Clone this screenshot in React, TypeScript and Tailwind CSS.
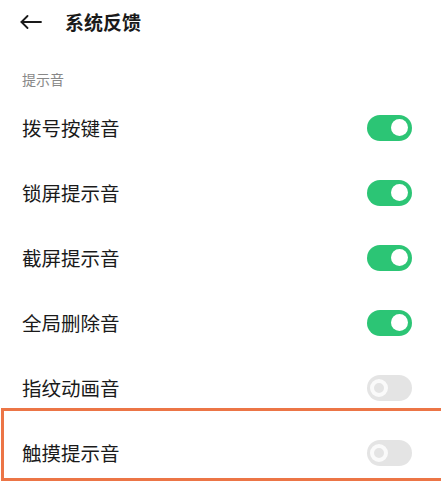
import React from "react";

const rows: { label: string; on: boolean }[] = [
  { label: "拨号按键音", on: true },
  { label: "锁屏提示音", on: true },
  { label: "截屏提示音", on: true },
  { label: "全局删除音", on: true },
  { label: "指纹动画音", on: false },
  { label: "触摸提示音", on: false },
];

function Toggle({ on }: { on: boolean }) {
  if (on) {
    return (
      <div className="w-[45px] h-[26px] rounded-full bg-[#2cc575] flex items-center justify-end pr-[4px]">
        <div className="w-[17px] h-[17px] rounded-full bg-white" />
      </div>
    );
  }
  return (
    <div className="w-[45px] h-[26px] rounded-full bg-[#e4e4e4] flex items-center justify-start pl-[3px]">
      <div className="w-[18px] h-[18px] rounded-full border-[4px] border-[#fafafa]" />
    </div>
  );
}

export default function App() {
  return (
    <div
      className="relative w-[441px] h-[497px] bg-white overflow-hidden"
      style={{ fontFamily: '"Noto Sans CJK SC", "Noto Sans", sans-serif' }}
    >
      <div className="h-[44px] flex items-center pl-[20px]">
        <svg width="22" height="14" viewBox="0 0 22 14" fill="none" stroke="#1a1a1a" strokeWidth="1.8" strokeLinecap="round" strokeLinejoin="round">
          <path d="M21 7H1.5" />
          <path d="M7.5 1L1.5 7l6 6" />
        </svg>
        <span className="ml-[23px] text-[19px] leading-[24px] font-bold text-[#1a1a1a]">系统反馈</span>
      </div>
      <div className="pt-[25px] pb-[6px] pl-[22px] text-[14px] leading-[20px] text-[#888888]">提示音</div>
      <div className="flex flex-col">
        {rows.map((r) => (
          <div key={r.label} className="h-[65px] flex items-center justify-between pl-[22px] pr-[29px]">
            <span className="text-[19.5px] leading-[26px] text-[#1a1a1a]">{r.label}</span>
            <Toggle on={r.on} />
          </div>
        ))}
      </div>
      <div className="absolute left-[1px] top-[408px] h-[73px] w-[460px] border-[3px] border-[#ec7546] pointer-events-none" />
    </div>
  );
}
